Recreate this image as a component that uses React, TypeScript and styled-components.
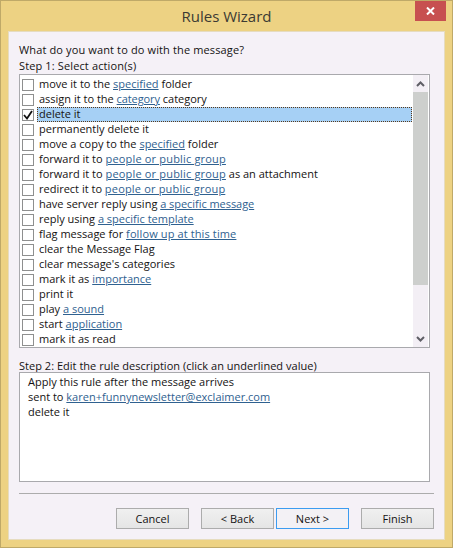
import React from "react";
import styled, { createGlobalStyle } from "styled-components";

const Global = createGlobalStyle`
  html, body { margin: 0; padding: 0; background: #edd283; }
  body { font-family: "Open Sans", "Noto Sans", sans-serif; }
`;

const Frame = styled.div`
  box-sizing: border-box;
  width: 453px;
  height: 548px;
  background: #edd283;
  border: 1px solid #bfa968;
  position: relative;
  display: flex;
  flex-direction: column;
  padding: 0 7px 7px 7px;
`;

const TitleBar = styled.div`
  height: 30px;
  flex: none;
  display: flex;
  align-items: center;
  justify-content: center;
  font-size: 15px;
  color: #3c3a33;
`;

const CloseButton = styled.div`
  position: absolute;
  top: 0;
  right: 6px;
  width: 31px;
  height: 20px;
  background: #c75050;
  display: flex;
  align-items: center;
  justify-content: center;
`;

const Content = styled.div`
  flex: 1;
  box-sizing: border-box;
  background: #f5f1f7;
  padding: 10px 10px 11px 10px;
  display: flex;
  flex-direction: column;
  font-size: 11px;
  color: #141212;
  border: 1px solid #e6dcc0;
  min-height: 0;
`;

const Label = styled.div`
  height: 16px;
  line-height: 16px;
  white-space: nowrap;
  letter-spacing: 0.13px;
`;

const DescLabel = styled(Label)`
  height: 15px;
  line-height: 18px;
  letter-spacing: 0.02px;
`;

const ListBox = styled.div`
  box-sizing: border-box;
  width: 411px;
  height: 274px;
  flex: none;
  border: 1px solid #a9a9ad;
  background: #fff;
  display: flex;
  margin-bottom: 9px;
`;

const Rows = styled.div`
  flex: 1;
  min-width: 0;
  padding: 2px 1px 0 0;
  overflow: hidden;
`;

const Row = styled.div`
  height: 15px;
  display: flex;
  align-items: center;
  white-space: nowrap;
`;

const Check = styled.span`
  box-sizing: border-box;
  width: 12px;
  height: 12px;
  margin: 0 3px 0 2px;
  flex: none;
  border: 1px solid #8e8f8f;
  background: #fff;
  display: flex;
  align-items: center;
  justify-content: center;
`;

const RowText = styled.span<{ $selected?: boolean }>`
  flex: 1;
  height: 15px;
  line-height: 14px;
  box-sizing: border-box;
  padding-left: 2px;
  background: ${(p) => (p.$selected ? "#a6d0f5" : "transparent")};
  outline: ${(p) => (p.$selected ? "1px dotted #5a3a1a" : "none")};
  outline-offset: -1px;
`;

const Link = styled.span<{ $spacing?: number }>`
  color: #2f6190;
  text-decoration: underline;
  letter-spacing: ${(p) => p.$spacing ?? 0}px;
`;

const ScrollBar = styled.div`
  width: 15px;
  flex: none;
  margin-right: 1px;
  background: #f3eff5;
  display: flex;
  flex-direction: column;
`;

const ScrollArrow = styled.div`
  height: 17px;
  flex: none;
  display: flex;
  align-items: center;
  justify-content: center;
`;

const ScrollTrack = styled.div`
  flex: 1;
  min-height: 0;
`;

const ScrollThumb = styled.div`
  height: 193px;
  background: #cdcfcd;
`;

const DescBox = styled.div`
  box-sizing: border-box;
  width: 411px;
  height: 110px;
  flex: none;
  border: 1px solid #a9a9ad;
  background: #fff;
  padding: 1px 8px;
  line-height: 15px;
`;

const DescLine = styled.div`
  height: 15px;
  white-space: nowrap;
`;

const Rule = styled.div`
  height: 1px;
  width: 415px;
  flex: none;
  background: #acacac;
  margin-top: 11px;
`;

const Footer = styled.div`
  display: flex;
  margin-top: 14px;
  width: 415px;
  justify-content: flex-end;
`;

const Button = styled.div<{ $active?: boolean; $gap?: number }>`
  box-sizing: border-box;
  width: 73px;
  height: 21px;
  margin-left: ${(p) => p.$gap ?? 0}px;
  border: 1px solid ${(p) => (p.$active ? "#3c9cf0" : "#acacac")};
  background: ${(p) =>
    p.$active ? "#f3f1f5" : "linear-gradient(#f0f0f0, #e5e5e5)"};
  display: flex;
  align-items: center;
  justify-content: center;
  font-size: 11px;
  color: #141212;
`;

type Part = string | { link: string; spacing?: number };

const group = { link: "people or public group", spacing: 0.18 };

const actions: Part[][] = [
  ["move it to the ", { link: "specified" }, " folder"],
  ["assign it to the ", { link: "category", spacing: -0.1 }, " category"],
  ["delete it"],
  ["permanently delete it"],
  ["move a copy to the ", { link: "specified" }, " folder"],
  ["forward it to ", group],
  ["forward it to ", group, " as an attachment"],
  ["redirect it to ", group],
  ["have server reply using ", { link: "a specific message", spacing: -0.05 }],
  ["reply using ", { link: "a specific template" }],
  ["flag message for ", { link: "follow up at this time", spacing: 0.12 }],
  ["clear the Message Flag"],
  ["clear message's categories"],
  ["mark it as ", { link: "importance" }],
  ["print it"],
  ["play ", { link: "a sound" }],
  ["start ", { link: "application" }],
  ["mark it as read"],
];

const renderParts = (parts: Part[]) =>
  parts.map((p, i) =>
    typeof p === "string" ? (
      <React.Fragment key={i}>{p}</React.Fragment>
    ) : (
      <Link key={i} $spacing={p.spacing}>{p.link}</Link>
    )
  );

export default function App() {
  return (
    <>
      <Global />
      <Frame>
        <TitleBar>Rules Wizard</TitleBar>
        <CloseButton>
          <svg width="9" height="8" viewBox="0 0 9 8">
            <path d="M1 0.5 L8 7.5 M8 0.5 L1 7.5" stroke="#fff" strokeWidth="2" fill="none" />
          </svg>
        </CloseButton>
        <Content>
          <Label>What do you want to do with the message?</Label>
          <Label>Step 1: Select action(s)</Label>
          <ListBox>
            <Rows>
              {actions.map((parts, i) => (
                <Row key={i}>
                  <Check>
                    {i === 2 && (
                      <svg width="10" height="10" viewBox="0 0 10 10">
                        <path d="M1 5 L4 8.5 L9 1" stroke="#111" strokeWidth="1.8" fill="none" />
                      </svg>
                    )}
                  </Check>
                  <RowText $selected={i === 2}>{renderParts(parts)}</RowText>
                </Row>
              ))}
            </Rows>
            <ScrollBar>
              <ScrollArrow>
                <svg width="9" height="6" viewBox="0 0 9 6">
                  <path d="M1 5 L4.5 1.5 L8 5" stroke="#5f5f66" strokeWidth="2" fill="none" />
                </svg>
              </ScrollArrow>
              <ScrollTrack>
                <ScrollThumb />
              </ScrollTrack>
              <ScrollArrow>
                <svg width="9" height="6" viewBox="0 0 9 6">
                  <path d="M1 1 L4.5 4.5 L8 1" stroke="#5f5f66" strokeWidth="2" fill="none" />
                </svg>
              </ScrollArrow>
            </ScrollBar>
          </ListBox>
          <DescLabel>Step 2: Edit the rule description (click an underlined value)</DescLabel>
          <DescBox>
            <DescLine>Apply this rule after the message arrives</DescLine>
            <DescLine>
              sent to <Link>karen+funnynewsletter@exclaimer.com</Link>
            </DescLine>
            <DescLine>delete it</DescLine>
          </DescBox>
          <Rule />
          <Footer>
            <Button>Cancel</Button>
            <Button $gap={12}>&lt; Back</Button>
            <Button $gap={2} $active>Next &gt;</Button>
            <Button $gap={12}>Finish</Button>
          </Footer>
        </Content>
      </Frame>
    </>
  );
}
